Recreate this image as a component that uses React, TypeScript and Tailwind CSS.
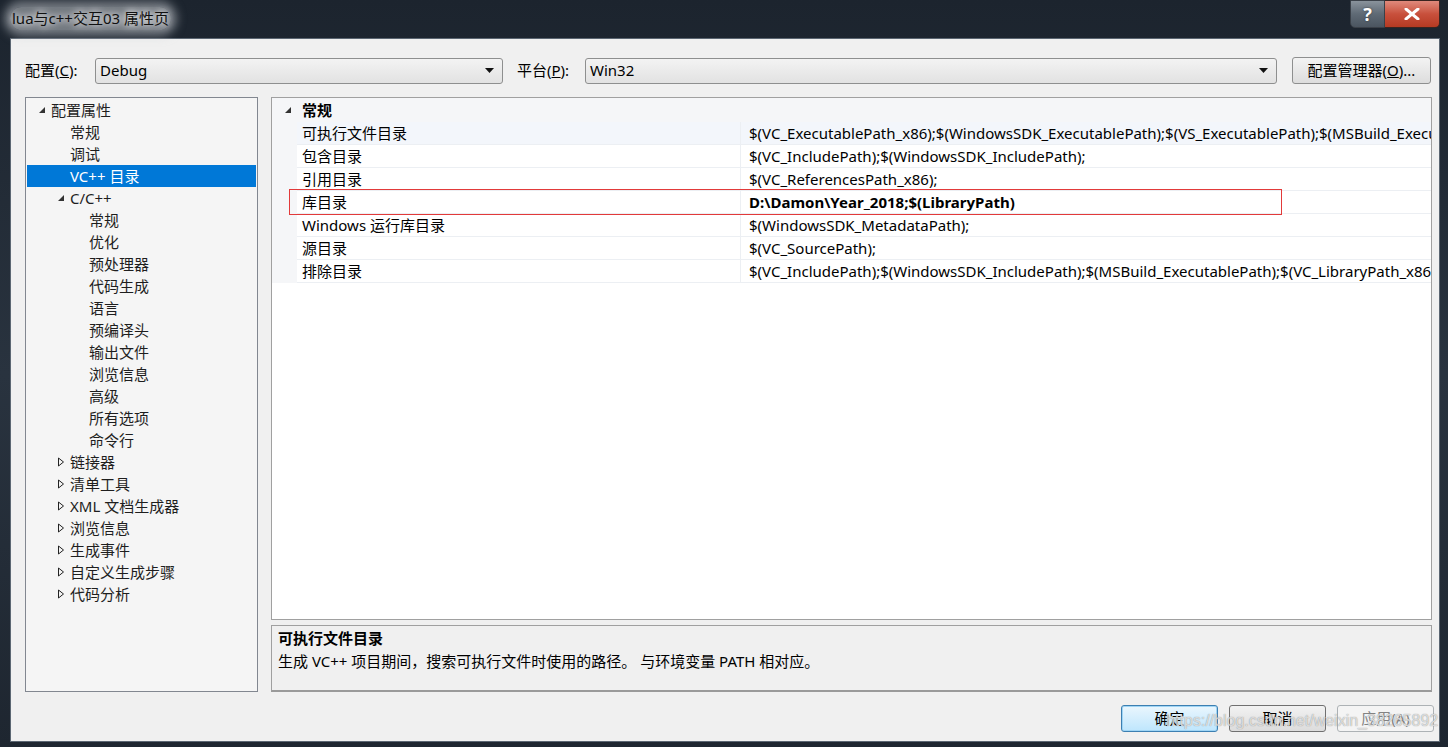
import React from "react";

const font = { fontFamily: '"Noto Sans", "Noto Sans CJK SC", sans-serif' };

type TreeItem = { label: string; level: number; exp?: "open" | "closed"; sel?: boolean };

const tree: TreeItem[] = [
  { label: "配置属性", level: 0, exp: "open" },
  { label: "常规", level: 1 },
  { label: "调试", level: 1 },
  { label: "VC++ 目录", level: 1, sel: true },
  { label: "C/C++", level: 1, exp: "open" },
  { label: "常规", level: 2 },
  { label: "优化", level: 2 },
  { label: "预处理器", level: 2 },
  { label: "代码生成", level: 2 },
  { label: "语言", level: 2 },
  { label: "预编译头", level: 2 },
  { label: "输出文件", level: 2 },
  { label: "浏览信息", level: 2 },
  { label: "高级", level: 2 },
  { label: "所有选项", level: 2 },
  { label: "命令行", level: 2 },
  { label: "链接器", level: 1, exp: "closed" },
  { label: "清单工具", level: 1, exp: "closed" },
  { label: "XML 文档生成器", level: 1, exp: "closed" },
  { label: "浏览信息", level: 1, exp: "closed" },
  { label: "生成事件", level: 1, exp: "closed" },
  { label: "自定义生成步骤", level: 1, exp: "closed" },
  { label: "代码分析", level: 1, exp: "closed" },
];

const rows = [
  { name: "可执行文件目录", value: "$(VC_ExecutablePath_x86);$(WindowsSDK_ExecutablePath);$(VS_ExecutablePath);$(MSBuild_ExecutablePath);$(FxCopDir);$(PATH);" },
  { name: "包含目录", value: "$(VC_IncludePath);$(WindowsSDK_IncludePath);" },
  { name: "引用目录", value: "$(VC_ReferencesPath_x86);" },
  { name: "库目录", value: "D:\\Damon\\Year_2018;$(LibraryPath)", bold: true },
  { name: "Windows 运行库目录", value: "$(WindowsSDK_MetadataPath);" },
  { name: "源目录", value: "$(VC_SourcePath);" },
  { name: "排除目录", value: "$(VC_IncludePath);$(WindowsSDK_IncludePath);$(MSBuild_ExecutablePath);$(VC_LibraryPath_x86);" },
];

const OpenArrow = () => (
  <svg width="8" height="8" viewBox="0 0 8 8">
    <path d="M7 1 L7 7 L1 7 Z" fill="#333" />
  </svg>
);

const ClosedArrow = () => (
  <svg width="8" height="10" viewBox="0 0 8 10">
    <path d="M1.5 1 L6.5 5 L1.5 9 Z" fill="none" stroke="#222" strokeWidth="1" />
  </svg>
);

const Combo = ({ text, w }: { text: string; w: string }) => (
  <div className={`${w} h-[26px] flex items-center rounded-[3px] border border-[#8e8f8f] bg-gradient-to-b from-[#f3f3f3] to-[#e2e2e2] pl-[4px] pr-[8px]`}>
    <span className="flex-1 text-[15px] text-black">{text}</span>
    <svg width="9" height="5" viewBox="0 0 9 5">
      <path d="M0 0 L9 0 L4.5 5 Z" fill="#111" />
    </svg>
  </div>
);

export default function App() {
  return (
    <div className="relative w-[1448px] h-[747px] overflow-hidden bg-gradient-to-b from-[#1c242e] via-[#29333f] to-[#1e2630]" style={font}>
      {/* title bar */}
      <div className="h-[38px] flex items-start">
        <div className="ml-[10px] mt-[7px] px-[2px] text-[15px] text-[#111] rounded-[12px] bg-[#c9ced3]/50 shadow-[0_0_10px_6px_rgba(201,206,211,0.5)] [text-shadow:0_0_6px_#fff,0_0_10px_#fff]">
          lua与c++交互03 属性页
        </div>
        <div className="ml-auto mr-[8px] flex">
          <div className="w-[35px] h-[28px] flex items-center justify-center rounded-bl-[5px] border border-[#3a4048] bg-gradient-to-b from-[#8a939c] via-[#5f6a75] to-[#4b5560]">
            <span className="text-[18px] font-bold text-white leading-none [text-shadow:0_0_2px_#333]">?</span>
          </div>
          <div className="w-[55px] h-[28px] flex items-center justify-center rounded-br-[5px] border border-l-0 border-[#3a2420] bg-gradient-to-b from-[#e08a7c] via-[#c8503c] to-[#b63a22]">
            <svg width="16" height="12" viewBox="0 0 16 12">
              <path d="M2 1 L14 11 M14 1 L2 11" stroke="#fff" strokeWidth="3" strokeLinecap="round" />
            </svg>
          </div>
        </div>
      </div>

      {/* client area */}
      <div className="ml-[10px] mr-[8px] h-[704px] border border-[#5b6672] bg-[#f0f0f0] pl-[14px] pr-[5px] pt-[18px] text-black">
        <div className="flex items-center h-[27px]">
          <span className="w-[70px] text-[15px]">配置(<u>C</u>):</span>
          <Combo text="Debug" w="w-[408px]" />
          <span className="ml-[14px] w-[68px] text-[15px]">平台(<u>P</u>):</span>
          <Combo text="Win32" w="w-[692px]" />
          <div className="ml-[15px] w-[139px] h-[27px] flex items-center justify-center rounded-[3px] border border-[#8e8f8f] bg-gradient-to-b from-[#f3f3f3] to-[#dddddd] text-[15px]">
            配置管理器(<u>O</u>)...
          </div>
        </div>

        <div className="mt-[13px] flex gap-[13px]">
          {/* tree */}
          <div className="w-[233px] h-[595px] border border-[#828790] bg-[#f5f5f5] pt-[1px] px-[1px]">
            {tree.map((t, i) => (
              <div
                key={i}
                className={`h-[22px] flex items-center text-[15px] ${t.sel ? "bg-[#0078d7] text-white" : "text-[#1e1e1e]"}`}
              >
                <div className={`w-[14px] flex items-center justify-center shrink-0 ${t.level === 0 ? "ml-[8px]" : t.level === 1 ? "ml-[27px]" : "ml-[46px]"}`}>
                  {t.exp === "open" ? <OpenArrow /> : t.exp === "closed" ? <ClosedArrow /> : null}
                </div>
                <span className="ml-[2px] whitespace-nowrap">{t.label}</span>
              </div>
            ))}
          </div>

          {/* right */}
          <div className="w-[1161px] flex flex-col">
            <div className="relative h-[523px] border border-[#a0a0a0] bg-white overflow-hidden">
              <div className="h-[24px] flex items-center bg-[#f5f6f8]">
                <div className="w-[30px] flex justify-center pl-[2px]">
                  <OpenArrow />
                </div>
                <span className="text-[15px] font-bold">常规</span>
              </div>
              {rows.map((r, i) => (
                <div key={i} className="h-[23px] flex">
                  <div className="w-[25px] shrink-0 bg-[#f5f6f8]" />
                  <div className={`w-[443px] shrink-0 flex items-center pl-[5px] border-b border-[#eceff3] text-[15px] ${i === 0 ? "bg-[#f3f6fb]" : ""}`}>
                    {r.name}
                  </div>
                  <div className={`flex-1 min-w-0 flex items-center pl-[8px] border-b border-l border-[#eceff3] text-[15px] whitespace-nowrap overflow-hidden ${i === 0 ? "bg-[#f3f6fb]" : ""} ${r.bold ? "font-bold" : ""}`}>
                    {r.value}
                  </div>
                </div>
              ))}
              <div className="absolute left-[17px] top-[91px] w-[993px] h-[26px] border border-[#e23a3a]" />
            </div>
            <div className="mt-[5px] h-[67px] border border-[#a0a0a0] border-b-2 border-b-[#9a9a9a] bg-[#f0f0f0] pl-[6px] pt-[1px]">
              <div className="text-[15px] font-bold leading-[22px]">可执行文件目录</div>
              <div className="text-[15px] leading-[24px]">生成 VC++ 项目期间，搜索可执行文件时使用的路径。 与环境变量 PATH 相对应。</div>
            </div>
          </div>
        </div>

        <div className="mt-[13px] flex justify-end gap-[11px]">
          <div className="w-[97px] h-[27px] flex items-center justify-center rounded-[3px] border border-[#3c7fb1] bg-gradient-to-b from-[#eaf6fd] to-[#bee6fd] text-[15px] shadow-[inset_0_0_0_1px_#9fd5f5]">
            确定
          </div>
          <div className="w-[97px] h-[27px] flex items-center justify-center rounded-[3px] border border-[#707070] bg-gradient-to-b from-[#f2f2f2] to-[#dcdcdc] text-[15px]">
            取消
          </div>
          <div className="w-[97px] h-[27px] flex items-center justify-center rounded-[3px] border border-[#adb2b5] bg-[#f4f4f4] text-[15px] text-[#838383]">
            应用(A)
          </div>
        </div>
      </div>

      {/* watermark */}
      <div className="absolute left-[1166px] top-[711px] text-[16px] leading-[20px] text-white/70 [text-shadow:0_0_1px_#777] whitespace-nowrap pointer-events-none" style={{ fontFamily: '"Liberation Sans", Arial, sans-serif' }}>
        https://blog.csdn.net/weixin_38265892
      </div>
    </div>
  );
}
